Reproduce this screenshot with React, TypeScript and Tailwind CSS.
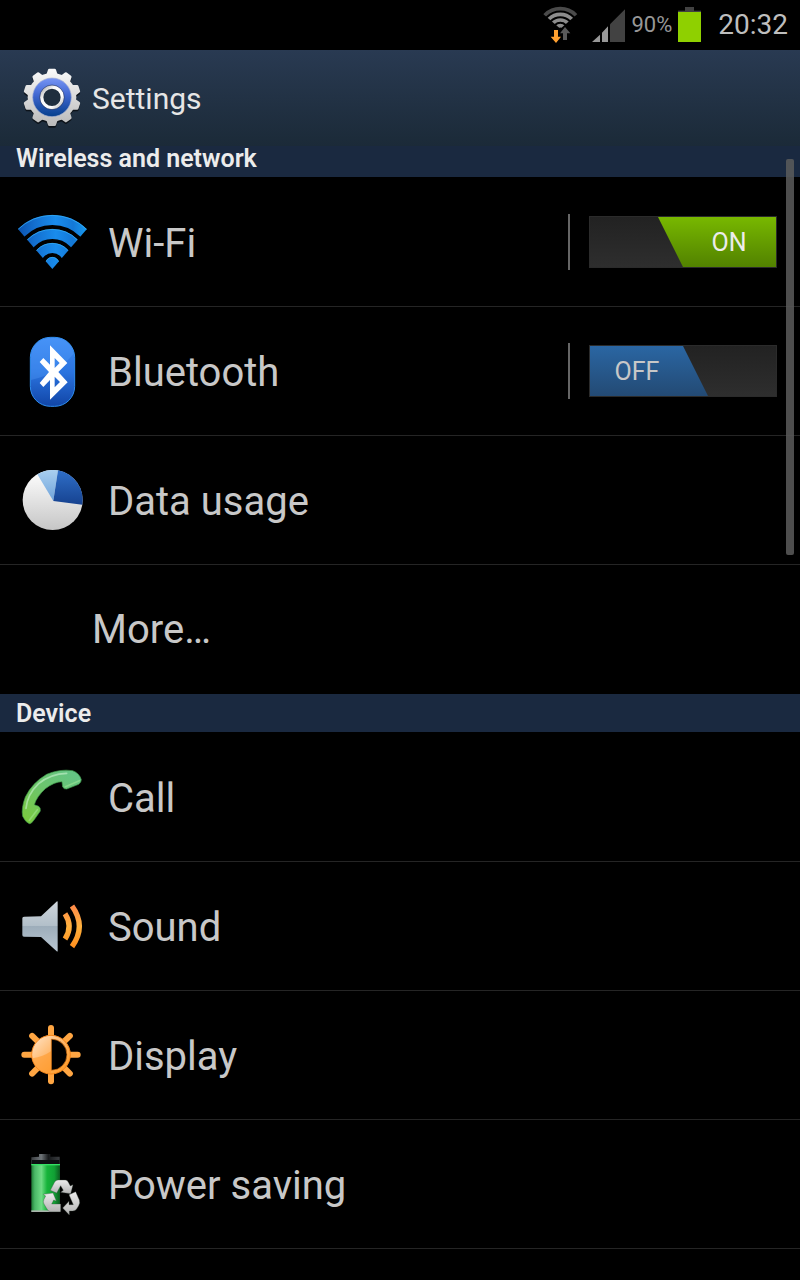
import { useState, type ReactNode } from 'react';

function GearIcon() {
    const teeth = [0, 36, 72, 108, 144, 180, 216, 252, 288, 324];
    return (
        <svg viewBox="60 48 192 192" className="w-16 h-16 shrink-0" aria-hidden="true">
            <defs>
                <linearGradient id="gearBody" gradientUnits="userSpaceOnUse" x1="0" y1="56" x2="0" y2="228">
                    <stop offset="0" stopColor="#fafafa" />
                    <stop offset="1" stopColor="#b9b9b9" />
                </linearGradient>
                <linearGradient id="gearBlue" x1="0" y1="0" x2="0" y2="1">
                    <stop offset="0" stopColor="#7795f5" />
                    <stop offset="0.45" stopColor="#3f66d0" />
                    <stop offset="1" stopColor="#053f8c" />
                </linearGradient>
                <linearGradient id="gearRing" x1="0" y1="0" x2="1" y2="1">
                    <stop offset="0" stopColor="#a8a8a8" />
                    <stop offset="0.3" stopColor="#f8f8f8" />
                    <stop offset="0.7" stopColor="#ffffff" />
                    <stop offset="1" stopColor="#b4b4b4" />
                </linearGradient>
                <mask id="gearMask" maskUnits="userSpaceOnUse" x="60" y="48" width="192" height="192">
                    <circle cx="156" cy="142" r="73" fill="#fff" />
                    {teeth.map(a => (
                        <path
                            key={a}
                            d="M139 74 L144 59 Q145 56 148 56 H164 Q167 56 168 59 L173 74Z"
                            fill="#fff"
                            transform={`rotate(${a} 156 142)`}
                        />
                    ))}
                </mask>
            </defs>
            <g transform="translate(0 5)" opacity="0.6">
                <rect x="60" y="48" width="192" height="192" fill="#000" mask="url(#gearMask)" />
            </g>
            <rect x="60" y="48" width="192" height="192" fill="url(#gearBody)" mask="url(#gearMask)" />
            <circle cx="156" cy="142" r="58" fill="url(#gearBlue)" stroke="#aab4d4" strokeWidth="2" />
            <circle cx="156" cy="142" r="31" fill="#1f2e3e" stroke="url(#gearRing)" strokeWidth="10" />
            <circle cx="156" cy="142" r="37" fill="none" stroke="#33416a" strokeWidth="2" />
        </svg>
    );
}

function WifiIcon() {
    return (
        <svg viewBox="48 18 216 216" className="w-[72px] h-[72px] shrink-0" aria-hidden="true">
            <defs>
                <clipPath id="wifiWedge">
                    <path d="M157 207 L-6 18 H320Z" />
                </clipPath>
                <linearGradient id="wifiBlue" gradientUnits="userSpaceOnUse" x1="54" y1="0" x2="260" y2="0">
                    <stop offset="0" stopColor="#0b52ae" />
                    <stop offset="0.25" stopColor="#1470d0" />
                    <stop offset="0.55" stopColor="#198cec" />
                    <stop offset="0.8" stopColor="#1478d6" />
                    <stop offset="1" stopColor="#189af0" />
                </linearGradient>
            </defs>
            <g clipPath="url(#wifiWedge)" fill="none" stroke="url(#wifiBlue)" strokeWidth="30">
                <circle cx="157" cy="193" r="133" />
                <circle cx="157" cy="193" r="91" />
                <circle cx="157" cy="193" r="49" />
                <circle cx="157" cy="193" r="11" strokeWidth="22" />
            </g>
            <g clipPath="url(#wifiWedge)" fill="none" stroke="#3ab6ff" strokeWidth="2">
                <circle cx="157" cy="193" r="147" />
                <circle cx="157" cy="193" r="105" />
                <circle cx="157" cy="193" r="63" />
                <circle cx="157" cy="193" r="21" />
            </g>
        </svg>
    );
}

function BluetoothIcon() {
    return (
        <svg viewBox="48 30 216 216" className="w-[72px] h-[72px] shrink-0" aria-hidden="true">
            <defs>
                <linearGradient id="btBody" x1="0" y1="0" x2="0" y2="1">
                    <stop offset="0" stopColor="#3f8bf4" />
                    <stop offset="0.5" stopColor="#2b74e0" />
                    <stop offset="1" stopColor="#1145a6" />
                </linearGradient>
            </defs>
            <rect x="91" y="37" width="133" height="207" rx="60" fill="url(#btBody)" stroke="#2f8ef0" strokeWidth="3" />
            <path d="M93 165 Q170 150 222 85 V96 Q222 39 160 39 Q93 39 93 100Z" fill="#5ba6ff" opacity="0.3" />
            <path
                d="M150 61 L202 114 L175 141 L203 172 L150 224 V165 L130 186 L119 174 L147 141 L119 111 L130 99 L150 119Z M164 99 V129 L179 114Z M164 155 V187 L180 171Z"
                fill="#fff"
                fillRule="evenodd"
            />
        </svg>
    );
}

function DataUsageIcon() {
    return (
        <svg viewBox="48 27 216 216" className="w-[72px] h-[72px] shrink-0" aria-hidden="true">
            <defs>
                <linearGradient id="pieBase" x1="0" y1="0" x2="0" y2="1">
                    <stop offset="0" stopColor="#ffffff" />
                    <stop offset="1" stopColor="#c6c6c6" />
                </linearGradient>
                <linearGradient id="pieDark" x1="0" y1="0" x2="0" y2="1">
                    <stop offset="0" stopColor="#2f6fc8" />
                    <stop offset="1" stopColor="#164290" />
                </linearGradient>
                <linearGradient id="pieLight" x1="0" y1="0" x2="0" y2="1">
                    <stop offset="0" stopColor="#a9cff0" />
                    <stop offset="1" stopColor="#6fa3da" />
                </linearGradient>
            </defs>
            <circle cx="158" cy="135" r="90" fill="url(#pieBase)" />
            <path d="M160 138 L112 58 A90 90 0 0 1 174 46Z" fill="url(#pieLight)" />
            <path d="M160 138 L174 46 A90 90 0 0 1 247 149Z" fill="url(#pieDark)" />
        </svg>
    );
}

function CallIcon() {
    return (
        <svg viewBox="48 18 216 216" className="w-[72px] h-[72px] shrink-0" aria-hidden="true">
            <defs>
                <linearGradient id="callGreen" x1="1" y1="0" x2="0" y2="1">
                    <stop offset="0" stopColor="#62c48a" />
                    <stop offset="0.5" stopColor="#6cc56c" />
                    <stop offset="1" stopColor="#7ccb3a" />
                </linearGradient>
            </defs>
            <path
                d="M88 206 Q78 204 68 184 Q63 160 76 126 Q96 84 140 58 Q180 41 218 47 Q238 54 244 74 Q244 82 236 88 L200 102 Q192 103 188 96 L186 80 Q164 80 136 101 Q110 125 103 149 L116 154 Q123 159 121 168 L102 195 Q94 207 88 206Z"
                fill="url(#callGreen)"
                stroke="#3f9a48"
                strokeWidth="2"
            />
            <path d="M78 160 Q82 118 116 86 Q152 56 200 55" fill="none" stroke="#c9f3cf" strokeWidth="5" strokeLinecap="round" opacity="0.6" />
            <path d="M196 95 L238 77 M88 196 L112 164" fill="none" stroke="#a8ec9a" strokeWidth="5" strokeLinecap="round" opacity="0.5" />
        </svg>
    );
}

function SoundIcon() {
    return (
        <svg viewBox="48 15 216 216" className="w-[72px] h-[72px] shrink-0" aria-hidden="true">
            <defs>
                <linearGradient id="speaker" gradientUnits="userSpaceOnUse" x1="0" y1="48" x2="0" y2="200">
                    <stop offset="0" stopColor="#cfd6dc" />
                    <stop offset="0.49" stopColor="#b2bfc9" />
                    <stop offset="0.5" stopColor="#9dadba" />
                    <stop offset="1" stopColor="#b9c7d3" />
                </linearGradient>
                <linearGradient id="soundWave" gradientUnits="userSpaceOnUse" x1="0" y1="60" x2="0" y2="190">
                    <stop offset="0" stopColor="#ff8a4a" />
                    <stop offset="0.5" stopColor="#ffb23e" />
                    <stop offset="1" stopColor="#ff8d1c" />
                </linearGradient>
            </defs>
            <path d="M72 95 L123 94 L171 49 Q173 48 173 52 V198 Q173 201 170 199 L123 156 L72 155 Q67 155 67 150 V100 Q67 95 72 95Z" fill="url(#speaker)" />
            <path d="M195 86 Q220 124 195 162" fill="none" stroke="url(#soundWave)" strokeWidth="16" />
            <path d="M216 63 Q260 124 216 185" fill="none" stroke="url(#soundWave)" strokeWidth="16" />
        </svg>
    );
}

function DisplayIcon() {
    const rays = [0, 45, 90, 135, 180, 225, 270, 315];
    return (
        <svg viewBox="48 27 216 216" className="w-[72px] h-[72px] shrink-0" aria-hidden="true">
            <defs>
                <linearGradient id="sun" x1="0" y1="0" x2="1" y2="1">
                    <stop offset="0" stopColor="#ffe6cc" />
                    <stop offset="0.5" stopColor="#ffb565" />
                    <stop offset="1" stopColor="#ff9417" />
                </linearGradient>
            </defs>
            {rays.map(a => (
                <line
                    key={a}
                    x1="153"
                    y1="54"
                    x2="153"
                    y2="80"
                    stroke="#ffa643"
                    strokeWidth="18"
                    strokeLinecap="round"
                    transform={`rotate(${a} 153 134)`}
                />
            ))}
            <circle cx="153" cy="134" r="58" fill="url(#sun)" stroke="#f7861a" strokeWidth="3" />
            <path d="M97 145 Q130 140 153 124 V190 A56 56 0 0 1 97 145Z" fill="#ff9a2c" opacity="0.6" />
            <path d="M154 87 A47 47 0 0 1 154 181Z" fill="#000" stroke="#f7861a" strokeWidth="2" />
        </svg>
    );
}

function PowerIcon() {
    return (
        <svg viewBox="48 24 216 216" className="w-[72px] h-[72px] shrink-0" aria-hidden="true">
            <defs>
                <linearGradient id="cell" x1="0" y1="0" x2="1" y2="0">
                    <stop offset="0" stopColor="#1f7a35" />
                    <stop offset="0.12" stopColor="#49b866" />
                    <stop offset="0.35" stopColor="#6fdc85" />
                    <stop offset="0.55" stopColor="#16b43b" />
                    <stop offset="0.8" stopColor="#11a034" />
                    <stop offset="1" stopColor="#0b5a1f" />
                </linearGradient>
                <linearGradient id="cellCap" x1="0" y1="0" x2="1" y2="0">
                    <stop offset="0" stopColor="#3a3d40" />
                    <stop offset="0.35" stopColor="#6e7478" />
                    <stop offset="0.6" stopColor="#16181a" />
                    <stop offset="1" stopColor="#3a3d40" />
                </linearGradient>
                <linearGradient id="recycle" x1="0" y1="0" x2="0" y2="1">
                    <stop offset="0" stopColor="#ececec" />
                    <stop offset="1" stopColor="#b4b4b4" />
                </linearGradient>
            </defs>
            <path d="M117 42 H151 V50 H179 V74 H94 V52 L117 50Z" fill="url(#cellCap)" />
            <path d="M96 60 H178 V72 H96Z" fill="#0d1012" />
            <rect x="94" y="72" width="86" height="143" fill="url(#cell)" />
            <rect x="94" y="72" width="86" height="4" fill="#35e064" />
            <rect x="94" y="211" width="86" height="5" fill="#a9b4ab" />
            <g fill="url(#recycle)" stroke="#3c4a40" strokeWidth="1">
                <path d="M151 151 L164 126 Q168 120 174 120 H196 Q202 120 205 127 L211 138 L219 134 L212 161 L182 157 L190 151 L182 137 L170 159Z" />
                <path d="M207 164 L227 155 L238 180 Q241 188 236 197 L230 207 Q226 213 218 213 H208 V225 L188 204 L207 184 V194 H220Z" />
                <path d="M130 163 L159 159 L169 183 L161 180 L155 192 H182 V215 H152 Q145 215 141 207 L132 192 Q128 186 132 178 L137 168Z" />
            </g>
        </svg>
    );
}

function StatusBar() {
    return (
        <div className="flex items-center justify-end h-[50px] pr-3 bg-black">
            <svg viewBox="36 0 108 150" className="w-9 h-[50px] mr-[13px]" aria-label="Wi-Fi connected">
                <defs>
                    <clipPath id="statusWedge">
                        <path d="M91 86 L5 12 H177Z" />
                    </clipPath>
                </defs>
                <g clipPath="url(#statusWedge)" fill="none" stroke="#8c8c8c" strokeWidth="11">
                    <circle cx="91" cy="91" r="65" stroke="#4a4a4a" />
                    <circle cx="91" cy="91" r="48" />
                    <circle cx="91" cy="91" r="31" />
                    <circle cx="91" cy="91" r="14" />
                </g>
                <path d="M72 90 H84 V110 H93 L78 129 L62 110 H72Z" fill="#ffa030" />
                <path d="M105 81 L121 100 H111 V120 H99 V100 H90Z" fill="#5a5a5a" />
            </svg>
            <svg viewBox="183 0 102 150" className="w-[34px] h-[50px] mr-[6px]" aria-label="Signal strength">
                <path d="M240 73 L285 28 V126 H240Z" fill="#424242" />
                <path d="M216 98 L234 79 V126 H216Z M186 126 L210 104 V126Z" fill="#979797" />
            </svg>
            <span className="text-[22px] leading-[50px] text-[#979797]">90%</span>
            <svg viewBox="444 0 69 150" className="w-[23px] h-[50px] ml-[6px] mr-[17px]" aria-label="Battery">
                <rect x="465" y="21" width="27" height="12" fill="#424242" />
                <rect x="444" y="32" width="69" height="4" fill="#424242" />
                <rect x="444" y="36" width="69" height="90" fill="#8fd000" />
            </svg>
            <span className="text-[28px] leading-[50px] text-[#bebebe]">20:32</span>
        </div>
    );
}

function Toggle({ label, initial }: { label: string; initial: boolean }) {
    const [on, setOn] = useState(initial);
    return (
        <div className="flex items-center gap-[19px] mr-[23px]">
            <div className="w-0.5 h-14 bg-[#666]" />
            <label
                className={`relative flex w-[188px] h-[52px] border border-[#2b2b2b] bg-linear-to-b from-[#222] to-[#2e2e2e] cursor-pointer ${on ? 'justify-end' : 'justify-start'}`}
            >
                <input
                    type="checkbox"
                    role="switch"
                    aria-label={label}
                    className="sr-only"
                    checked={on}
                    onChange={e => setOn(e.target.checked)}
                />
                {on ? (
                    <span className="flex items-center justify-center w-[118px] pl-6 text-[25px] leading-none text-[#ececec] bg-linear-to-b from-[#78b800] to-[#528200] [clip-path:polygon(0_0,100%_0,100%_100%,25px_100%)]">
                        ON
                    </span>
                ) : (
                    <span className="flex items-center justify-center w-[118px] pr-6 text-[25px] leading-none text-[#c8c8c8] bg-linear-to-b from-[#2a66a3] to-[#234a74] [clip-path:polygon(0_0,93px_0,100%_100%,0_100%)]">
                        OFF
                    </span>
                )}
            </label>
        </div>
    );
}

type RowProps = { label: string; icon: ReactNode; children?: ReactNode };

function Row({ label, icon, children }: RowProps) {
    return (
        <li className="flex items-center h-[129px] border-b border-[#252525]">
            <a href="#" className="flex flex-1 items-center gap-5 h-full pl-4">
                {icon}
                <span className="pt-1">{label}</span>
            </a>
            {children}
        </li>
    );
}

export default function App() {
    return (
        <div className="min-h-screen bg-black text-[#c8c8c8] font-['Roboto',sans-serif]">
            <StatusBar />
            <header className="flex items-center gap-2 h-24 pl-5 bg-linear-to-b from-[#293a52] to-[#1b2a38]">
                <GearIcon />
                <h1 className="text-[30px] text-[#e6e6e6]">Settings</h1>
            </header>

            <main className="relative text-[40px] leading-[48px]">
                <h2 className="h-[32px] pl-4 border-b border-black bg-[#1a2940] text-[25px] leading-[26px] font-semibold text-[#ececec]">
                    Wireless and network
                </h2>
                <ul>
                    <Row label="Wi-Fi" icon={<WifiIcon />}>
                        <Toggle label="Wi-Fi" initial={true} />
                    </Row>
                    <Row label="Bluetooth" icon={<BluetoothIcon />}>
                        <Toggle label="Bluetooth" initial={false} />
                    </Row>
                    <Row label="Data usage" icon={<DataUsageIcon />} />
                    <li className="h-[129px]">
                        <a href="#" className="flex items-center h-full pl-[92px]">More…</a>
                    </li>
                </ul>

                <h2 className="h-[39px] pl-4 border-b border-black bg-[#1a2940] text-[25px] leading-[40px] font-semibold text-[#ececec]">
                    Device
                </h2>
                <ul>
                    <Row label="Call" icon={<CallIcon />} />
                    <Row label="Sound" icon={<SoundIcon />} />
                    <Row label="Display" icon={<DisplayIcon />} />
                    <Row label="Power saving" icon={<PowerIcon />} />
                </ul>

                {/* Scroll indicator */}
                <div className="absolute top-[13px] right-1.5 w-2 h-[396px] rounded-xs bg-[#5c5c5c]/85" />
            </main>
        </div>
    );
}
